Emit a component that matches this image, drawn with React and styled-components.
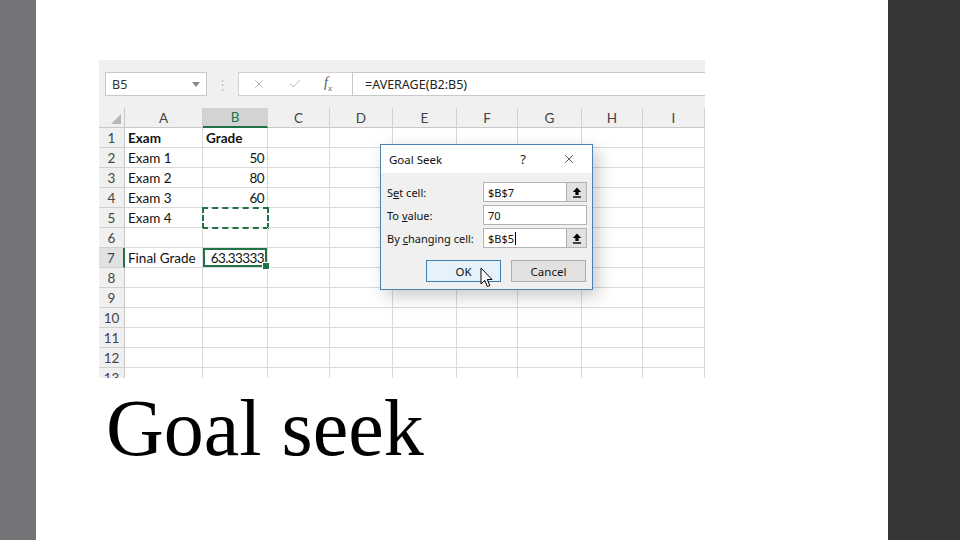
import styled, { createGlobalStyle } from "styled-components"
import { X, Check } from "lucide-react"

const GlobalStyle = createGlobalStyle`
  body { margin:0; background:#fff; }
  * { box-sizing:border-box; }
`

const COLS = ["A", "B", "C", "D", "E", "F", "G", "H", "I"]
const WIDTHS = [26, 78, 65, 62, 63, 64, 61, 64, 61, 62]

const ROWS = [
  { a: "Exam", b: "Grade", bold: true },
  { a: "Exam 1", b: "50" },
  { a: "Exam 2", b: "80" },
  { a: "Exam 3", b: "60" },
  { a: "Exam 4", b: "", mark: "copy" },
  { a: "", b: "" },
  { a: "Final Grade", b: "63.33333", mark: "active" },
  {}, {}, {}, {}, {}, {},
]

const Page = styled.div`
  display:flex;
  width:960px;
  height:540px;
  overflow:hidden;
`
const LeftBar = styled.div`
  width:36px;
  background:#737378;
`
const RightBar = styled.div`
  width:72px;
  background:#363638;
`
const Slide = styled.main`
  flex:1;
  background:#fff;
  padding:60px 0 0 63px;
  display:flex;
  flex-direction:column;
`
const Excel = styled.div`
  position:relative;
  width:606px;
  height:318px;
  background:#f0f0f0;
  display:flex;
  flex-direction:column;
  overflow:hidden;
  font-family:"Noto Sans", sans-serif;
`
const FormulaRow = styled.div`
  display:flex;
  align-items:center;
  height:24px;
  margin:12px 0;
  padding-left:6px;
`
const NameBox = styled.div`
  width:102px;
  height:24px;
  background:#fff;
  border:1px solid #c8c8c8;
  display:flex;
  align-items:center;
  justify-content:space-between;
  padding:0 6px;
  font-size:12.5px;
  color:#333;
`
const DropArrow = styled.span`
  width:0;
  height:0;
  border-left:4px solid transparent;
  border-right:4px solid transparent;
  border-top:5px solid #8a8a8a;
`
const Dots = styled.div`
  width:31px;
  text-align:center;
  color:#c4c4c4;
  font-size:13px;
`
const FxBox = styled.div`
  width:114px;
  height:24px;
  background:#fff;
  border:1px solid #d0d0d0;
  border-right:none;
  display:flex;
  align-items:center;
  gap:22px;
  padding-left:13px;
  color:#b0b0b0;
`
const Fx = styled.span`
  font-family:"Liberation Serif", serif;
  font-style:italic;
  font-size:14px;
  color:#555;
  sub { font-size:9px; }
`
const Formula = styled.div`
  flex:1;
  height:24px;
  background:#fff;
  border:1px solid #c8c8c8;
  border-right:none;
  display:flex;
  align-items:center;
  padding-left:12px;
  font-size:12.5px;
  color:#222;
`
const Sheet = styled.div`
  display:grid;
  grid-template-columns:${WIDTHS.map(w => w + "px").join(" ")};
  grid-auto-rows:20px;
  background:#fff;
  flex:1;
  overflow:hidden;
  font-family:Lato, "Noto Sans", sans-serif;
  font-size:13.5px;
`
const Corner = styled.div`
  background:#f0f0f0;
  border-right:1px solid #c8c8c8;
  border-bottom:1px solid #c8c8c8;
  display:flex;
  align-items:flex-end;
  justify-content:flex-end;
  padding:0 3px 3px 0;
`
const CornerMark = styled.span`
  width:10px;
  height:10px;
  background:#b8b8b8;
  clip-path:polygon(100% 0, 100% 100%, 0 100%);
`
const ColHead = styled.div`
  background:${p => (p.$active ? "#d3d3d3" : "#f0f0f0")};
  border-right:1px solid #d0d0d0;
  border-bottom:${p => (p.$active ? "2px solid #217346" : "1px solid #c8c8c8")};
  display:flex;
  align-items:center;
  justify-content:center;
  color:${p => (p.$active ? "#217346" : "#444")};
`
const RowHead = styled.div`
  background:${p => (p.$active ? "#e1e1e1" : "#f0f0f0")};
  border-right:${p => (p.$active ? "2px solid #217346" : "1px solid #c8c8c8")};
  border-bottom:1px solid #d0d0d0;
  display:flex;
  align-items:center;
  justify-content:center;
  color:#444;
`
const Cell = styled.div`
  position:relative;
  border-right:1px solid #dadada;
  border-bottom:1px solid #dadada;
  display:flex;
  align-items:center;
  justify-content:${p => (p.$num ? "flex-end" : "flex-start")};
  padding:0 3px;
  color:#111;
  font-weight:${p => (p.$bold ? 700 : 400)};
  letter-spacing:${p => (p.$num ? "-0.6px" : "0")};
  white-space:nowrap;
  ${p => p.$mark === "copy" && `
    outline:2px dashed #217346;
    outline-offset:-1px;
  `}
  ${p => p.$mark === "active" && `
    box-shadow:inset 0 0 0 2px #217346;
    z-index:1;
    &::after {
      content:"";
      position:absolute;
      right:-3px;
      bottom:-3px;
      width:6px;
      height:6px;
      background:#217346;
      border:1px solid #fff;
    }
  `}
`
const Dialog = styled.div`
  position:absolute;
  left:281px;
  top:84px;
  width:213px;
  height:146px;
  z-index:2;
  border:1px solid #4f82b3;
  background:#f0f0f0;
  box-shadow:5px 6px 16px rgba(0,0,0,.22);
  display:flex;
  flex-direction:column;
  font-size:11px;
  color:#111;
`
const DialogTitle = styled.div`
  height:28px;
  background:#fff;
  display:flex;
  align-items:center;
  padding-left:8px;
  font-size:11.5px;
`
const TitleText = styled.span`
  flex:1;
`
const TitleBtn = styled.span`
  width:${p => p.$w}px;
  display:flex;
  justify-content:center;
  font-size:13px;
  color:#222;
`
const DialogBody = styled.div`
  padding:9px 5px 0 6px;
  display:flex;
  flex-direction:column;
`
const Fields = styled.div`
  display:grid;
  grid-template-columns:96px 104px;
  grid-auto-rows:20px;
  row-gap:3px;
  align-items:center;
`
const Input = styled.div`
  height:20px;
  background:#fff;
  border:1px solid #b4b4b4;
  display:flex;
  align-items:center;
  padding-left:4px;
`
const InputText = styled.span`
  flex:1;
  display:flex;
  align-items:center;
`
const Caret = styled.span`
  width:1px;
  height:13px;
  background:#000;
  margin-left:1px;
`
const PickBtn = styled.span`
  width:20px;
  height:18px;
  background:#e1e1e1;
  border-left:1px solid #adadad;
  display:flex;
  align-items:center;
  justify-content:center;
`
const Buttons = styled.div`
  display:flex;
  justify-content:flex-end;
  gap:10px;
  margin-top:12px;
  padding-right:1px;
`
const Button = styled.div`
  position:relative;
  width:75px;
  height:22px;
  display:flex;
  align-items:center;
  justify-content:center;
  background:${p => (p.$primary ? "#e5f1fb" : "#e1e1e1")};
  border:1px solid ${p => (p.$primary ? "#3c7fb1" : "#adadad")};
  font-size:11.5px;
`
const Pointer = styled.svg`
  position:absolute;
  left:53px;
  top:6px;
`
const Title = styled.h1`
  margin:10px 0 0 7px;
  font-family:"Liberation Serif", "Times New Roman", serif;
  font-weight:400;
  font-size:80px;
  line-height:1;
  color:#000;
`

const PickIcon = () => (
  <svg width="10" height="11" viewBox="0 0 10 11">
    <path d="M5 0.5 L0.8 5 H3.4 V8 H6.6 V5 H9.2 Z" fill="#000" />
    <rect x="1" y="9.3" width="8" height="1.4" fill="#000" />
  </svg>
)

const App = () => {
  return (
    <>
      <GlobalStyle />
      <Page>
        <LeftBar />
        <Slide>
          <Excel>
            <FormulaRow>
              <NameBox>B5<DropArrow /></NameBox>
              <Dots>⋮</Dots>
              <FxBox>
                <X size={14} strokeWidth={1.6} />
                <Check size={14} strokeWidth={1.6} />
                <Fx>f<sub>x</sub></Fx>
              </FxBox>
              <Formula>=AVERAGE(B2:B5)</Formula>
            </FormulaRow>
            <Sheet>
              <Corner><CornerMark /></Corner>
              {COLS.map(c => (
                <ColHead key={c} $active={c === "B"}>{c}</ColHead>
              ))}
              {ROWS.map((r, i) => (
                <Row key={i} n={i + 1} row={r} />
              ))}
            </Sheet>
            <Dialog>
              <DialogTitle>
                <TitleText>Goal Seek</TitleText>
                <TitleBtn $w={46}>?</TitleBtn>
                <TitleBtn $w={46}>
                  <X size={14} strokeWidth={1.3} />
                </TitleBtn>
              </DialogTitle>
              <DialogBody>
                <Fields>
                  <span>S<u>e</u>t cell:</span>
                  <Input>
                    <InputText>$B$7</InputText>
                    <PickBtn><PickIcon /></PickBtn>
                  </Input>
                  <span>To <u>v</u>alue:</span>
                  <Input><InputText>70</InputText></Input>
                  <span>By <u>c</u>hanging cell:</span>
                  <Input>
                    <InputText>$B$5<Caret /></InputText>
                    <PickBtn><PickIcon /></PickBtn>
                  </Input>
                </Fields>
                <Buttons>
                  <Button $primary>
                    OK
                    <Pointer width="13" height="21" viewBox="0 0 13 21">
                      <path
                        d="M1 1 L1 17 L4.8 13.4 L7.4 19.5 L9.8 18.5 L7.3 12.5 L12 12.5 Z"
                        fill="#fff"
                        stroke="#000"
                        strokeWidth="1"
                        strokeLinejoin="round"
                      />
                    </Pointer>
                  </Button>
                  <Button>Cancel</Button>
                </Buttons>
              </DialogBody>
            </Dialog>
          </Excel>
          <Title>Goal seek</Title>
        </Slide>
        <RightBar />
      </Page>
    </>
  )
}

const Row = ({ n, row }) => {
  const active = row.mark === "active"
  return (
    <>
      <RowHead $active={active}>{n}</RowHead>
      <Cell $bold={row.bold}>{row.a}</Cell>
      <Cell $bold={row.bold} $num={/^[\d.]+$/.test(row.b || "")} $mark={row.mark}>
        {row.b}
      </Cell>
      {COLS.slice(2).map(c => (
        <Cell key={c} />
      ))}
    </>
  )
}

export default App
